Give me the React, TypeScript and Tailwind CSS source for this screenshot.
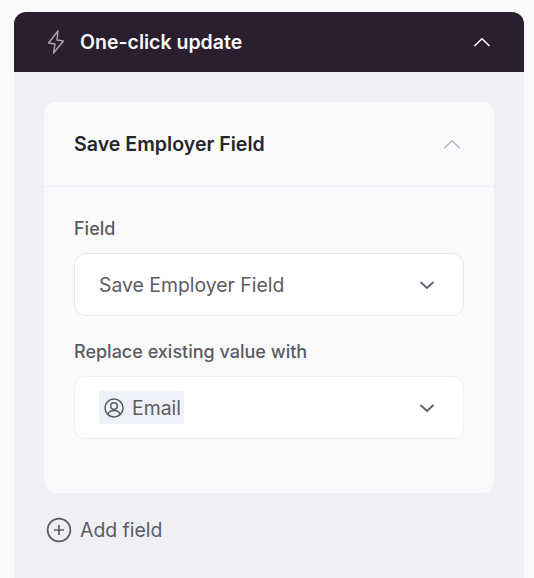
import { FC } from 'react';

const Chevron: FC<{ up?: boolean; className: string }> = ({ up, className }) => (
    <svg width="18" height="10" viewBox="0 0 18 10" fill="none" stroke="currentColor" strokeWidth={up ? 1.5 : 1.8} className={className}>
        <path d={up ? 'M1.5 9 L9 1.8 L16.5 9' : 'M2.5 2 L9 8 L15.5 2'} />
    </svg>
);

export default function App() {
    return (
        <div className="min-h-[578px] h-[578px] overflow-hidden bg-[#fafafc] pt-3 pl-3.5 pr-2.5 font-['Inter',sans-serif] antialiased">
            <div className="h-[566px] bg-[#efeff4] rounded-t-xl overflow-hidden">
                <div className="h-[60px] bg-[#2a1e2f] flex items-center pl-[33px] pr-[33px]">
                    <svg width="18" height="24" viewBox="0 0 18 24" fill="none" stroke="#a8a3ab" strokeWidth="1.5" strokeLinejoin="round" className="mr-[15px]">
                        <path d="M11 1 L1.5 13 L8 14 L6.5 23 L16.5 11 L10 10 Z" />
                    </svg>
                    <span className="text-[19.5px] font-semibold text-[#fafafc] flex-1 pt-px">One-click update</span>
                    <Chevron up className="text-white" />
                </div>
                <div className="pt-[30px] px-[30px]">
                    <div className="h-[391px] bg-[#fafafc] rounded-xl">
                        <div className="h-[85px] border-b border-[#eeeff3] flex items-center pl-[30px] pr-[33px]">
                            <span className="text-[19.6px] font-semibold text-[#25272c] flex-1 pt-px">Save Employer Field</span>
                            <Chevron up className="text-[#b4b5bb]" />
                        </div>
                        <div className="px-[30px] pt-[30px]">
                            <div className="text-[18px] leading-[24px] font-medium text-[#5c5b62] mb-[12px]">Field</div>
                            <div className="h-[63px] bg-white border border-[#e5e6ea] rounded-xl flex items-center pl-6 pr-[27px]">
                                <span className="text-[19.4px] text-[#5c5b62] flex-1 pt-[2px]">Save Employer Field</span>
                                <Chevron className="text-[#5d6070]" />
                            </div>
                            <div className="text-[18px] leading-[24px] font-medium text-[#5c5b62] mt-6 mb-3">Replace existing value with</div>
                            <div className="h-[63px] bg-white border border-[#eeeff3] rounded-xl flex items-center pl-6 pr-[27px]">
                                <div className="flex-1">
                                    <span className="inline-flex items-center h-[33px] w-[85px] bg-[#eef2f8] rounded-[3px] pl-[5px]">
                                        <svg width="20" height="20" viewBox="0 0 20 20" fill="none" stroke="#5c5b62" strokeWidth="1.5" className="mr-2">
                                            <circle cx="10" cy="10" r="9" />
                                            <circle cx="10" cy="8" r="3.3" />
                                            <path d="M4 16 C5.2 13.2 7.5 12.6 10 12.6 C12.5 12.6 14.8 13.2 16 16" />
                                        </svg>
                                        <span className="text-[19.4px] text-[#5c5b62] pt-[2px]">Email</span>
                                    </span>
                                </div>
                                <Chevron className="text-[#5d6070]" />
                            </div>
                        </div>
                    </div>
                    <div className="flex items-center mt-[24px] ml-[2px] h-[26px]">
                        <svg width="26" height="26" viewBox="0 0 26 26" fill="none" stroke="#5c5b62" strokeWidth="1.7" className="mr-[8px]">
                            <circle cx="13" cy="13" r="11.4" />
                            <path d="M13 8 V18 M8 13 H18" />
                        </svg>
                        <span className="text-[19.4px] text-[#5c5b62] pt-px">Add field</span>
                    </div>
                </div>
            </div>
        </div>
    );
}
